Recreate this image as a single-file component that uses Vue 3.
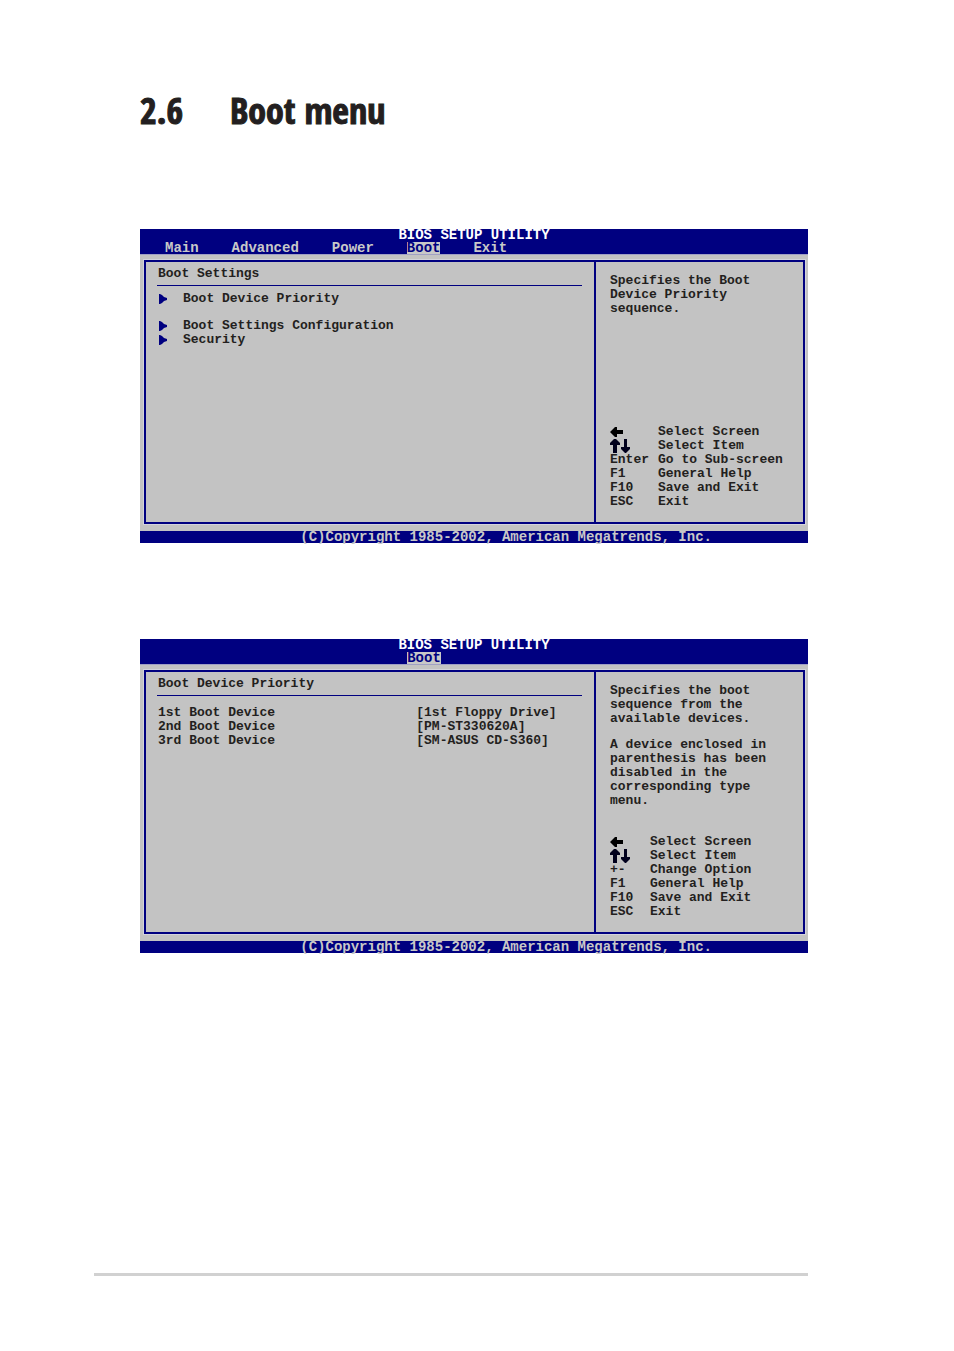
<template>
  <main class="page">
    <h1 class="heading">
      <span class="number">2.6</span>
      <span>Boot menu</span>
    </h1>
    <section v-for="screen in screens" :key="screen.title" class="screen">
      <header class="top">
        <div class="utility">BIOS SETUP UTILITY</div>
        <nav class="tabs" :class="{ single: screen.tabs.length === 1 }">
          <a v-for="tab in screen.tabs" :key="tab" href="#" :class="{ active: tab === 'Boot' }">{{ tab }}</a>
        </nav>
      </header>
      <div class="panel">
        <div class="content">
          <h2 class="title">{{ screen.title }}</h2>
          <ul v-if="screen.menu" class="menu">
            <li v-for="item in screen.menu" :key="item">
              <svg class="marker" viewBox="0 0 9 12" aria-hidden="true">
                <path d="M0 1h1l2 1 2 2 3 1v2L5 8l-2 2-2 1H0z" />
              </svg>
              <a href="#">{{ item }}</a>
            </li>
          </ul>
          <table v-else class="devices">
            <tbody>
              <tr v-for="device in screen.devices" :key="device.name">
                <th scope="row">{{ device.name }}</th>
                <td>[{{ device.value }}]</td>
              </tr>
            </tbody>
          </table>
        </div>
        <aside class="side">
          <div class="help">
            <p v-for="(lines, i) in screen.help" :key="i">
              <span v-for="line in lines" :key="line">{{ line }}</span>
            </p>
          </div>
          <dl class="keys" :class="{ narrow: !screen.menu }">
            <template v-for="item in screen.keys" :key="item.text">
              <dt>
                <svg v-if="item.key === 'left'" class="arrow" viewBox="0 0 20 14" role="img" aria-label="Left">
                  <path d="M0 7l5-5h2v3h6v4H7v3H5z" fill="#000" />
                </svg>
                <svg v-else-if="item.key === 'updown'" class="arrow" viewBox="0 0 20 14" role="img" aria-label="Up and down">
                  <path d="M4 0h2l4 4v2H7v8H3V6H0V4z M14 0h3v8h3v2l-4 4h-1l-4-4V8h3z" fill="#00001c" />
                </svg>
                <template v-else>{{ item.key }}</template>
              </dt>
              <dd>{{ item.text }}</dd>
            </template>
          </dl>
        </aside>
      </div>
      <footer class="copyright">(C)Copyright 1985-2002, American Megatrends, Inc.</footer>
    </section>
    <hr class="rule" />
  </main>
</template>

<script setup>
const arrows = [
  { key: 'left', text: 'Select Screen' },
  { key: 'updown', text: 'Select Item' }
]
const common = [
  { key: 'F1', text: 'General Help' },
  { key: 'F10', text: 'Save and Exit' },
  { key: 'ESC', text: 'Exit' }
]

const screens = [
  {
    title: 'Boot Settings',
    tabs: ['Main', 'Advanced', 'Power', 'Boot', 'Exit'],
    menu: ['Boot Device Priority', 'Boot Settings Configuration', 'Security'],
    help: [['Specifies the Boot', 'Device Priority', 'sequence.']],
    keys: [...arrows, { key: 'Enter', text: 'Go to Sub-screen' }, ...common]
  },
  {
    title: 'Boot Device Priority',
    tabs: ['Boot'],
    devices: [
      { name: '1st Boot Device', value: '1st Floppy Drive' },
      { name: '2nd Boot Device', value: 'PM-ST330620A' },
      { name: '3rd Boot Device', value: 'SM-ASUS CD-S360' }
    ],
    help: [
      ['Specifies the boot', 'sequence from the', 'available devices.'],
      ['A device enclosed in', 'parenthesis has been', 'disabled in the', 'corresponding type', 'menu.']
    ],
    keys: [...arrows, { key: '+-', text: 'Change Option' }, ...common]
  }
]
</script>

<style>
body {
  margin: 0;
  background: #fff;
}
</style>

<style scoped>
.page {
  padding: 88px 146px 75px 140px;
  color: #231f20;
  font-family: "Liberation Mono", "Courier New", monospace;
  font-size: 13px;
  line-height: 14px;
}
.heading {
  display: flex;
  margin: 0 0 95px;
  font-family: Impact, "Open Sans Condensed", "Liberation Sans Narrow", "Roboto Condensed", sans-serif;
  font-size: 36px;
  font-weight: 700;
  line-height: 46px;
  -webkit-text-stroke: 1px #231f20;
}
.number {
  width: 90px;
}
.screen {
  margin-bottom: 96px;
  background: #c3c3c3;
  font-weight: 700;
}
.screen a {
  color: inherit;
  text-decoration: none;
}
.top {
  background: #000080;
  border-bottom: 1px solid #a0a0c4;
  color: #c8c8c8;
  font-size: 14px;
}
.utility {
  color: #fff;
  line-height: 13px;
  text-align: center;
}
.tabs {
  display: flex;
  gap: 33px;
  padding-left: 25px;
  line-height: 12px;
}
.tabs.single {
  padding-left: 40%;
}
.tabs .active {
  background: #c8c8c8;
  color: #000080;
}
.panel {
  display: flex;
  box-sizing: border-box;
  min-height: 264px;
  margin: 5px 3px 7px 4px;
  border: 2px solid #000080;
  outline: 1px solid #d4d4dc;
}
.content {
  flex: 1;
  padding: 5px 12px 0 11px;
}
.title {
  margin: 0 0 6px;
  padding: 0 1px 4px;
  border-bottom: 1px solid #000080;
  font-size: 13px;
  line-height: 14px;
}
.menu {
  margin: 0;
  padding: 0 2px;
  list-style: none;
}
.menu li {
  display: flex;
  align-items: center;
}
.menu li:first-child {
  margin-bottom: 13px;
}
.marker {
  width: 9px;
  height: 12px;
  margin-right: 15px;
  fill: #000080;
}
.devices {
  width: 100%;
  margin-top: 10px;
  border-collapse: collapse;
}
.devices th,
.devices td {
  padding: 0;
  text-align: left;
}
.devices th {
  width: 61%;
  padding-left: 1px;
}
.side {
  display: flex;
  flex-direction: column;
  justify-content: space-between;
  box-sizing: border-box;
  width: 209px;
  padding: 12px 0 13px 14px;
  border-left: 2px solid #000080;
}
.help p {
  margin: 0 0 12px;
}
.help span {
  display: block;
}
.keys {
  display: grid;
  grid-template-columns: 48px 1fr;
  margin: 0;
}
.keys.narrow {
  grid-template-columns: 40px 1fr;
}
.keys dd {
  margin: 0;
  white-space: nowrap;
}
.arrow {
  display: block;
  width: 20px;
  height: 14px;
}
.copyright {
  padding-left: 24%;
  background: #000080;
  color: #c8c8c8;
  font-size: 14px;
  line-height: 12px;
}
.rule {
  height: 3px;
  margin: 320px 0 0 -46px;
  border: 0;
  background: #d1d1d1;
}
</style>
